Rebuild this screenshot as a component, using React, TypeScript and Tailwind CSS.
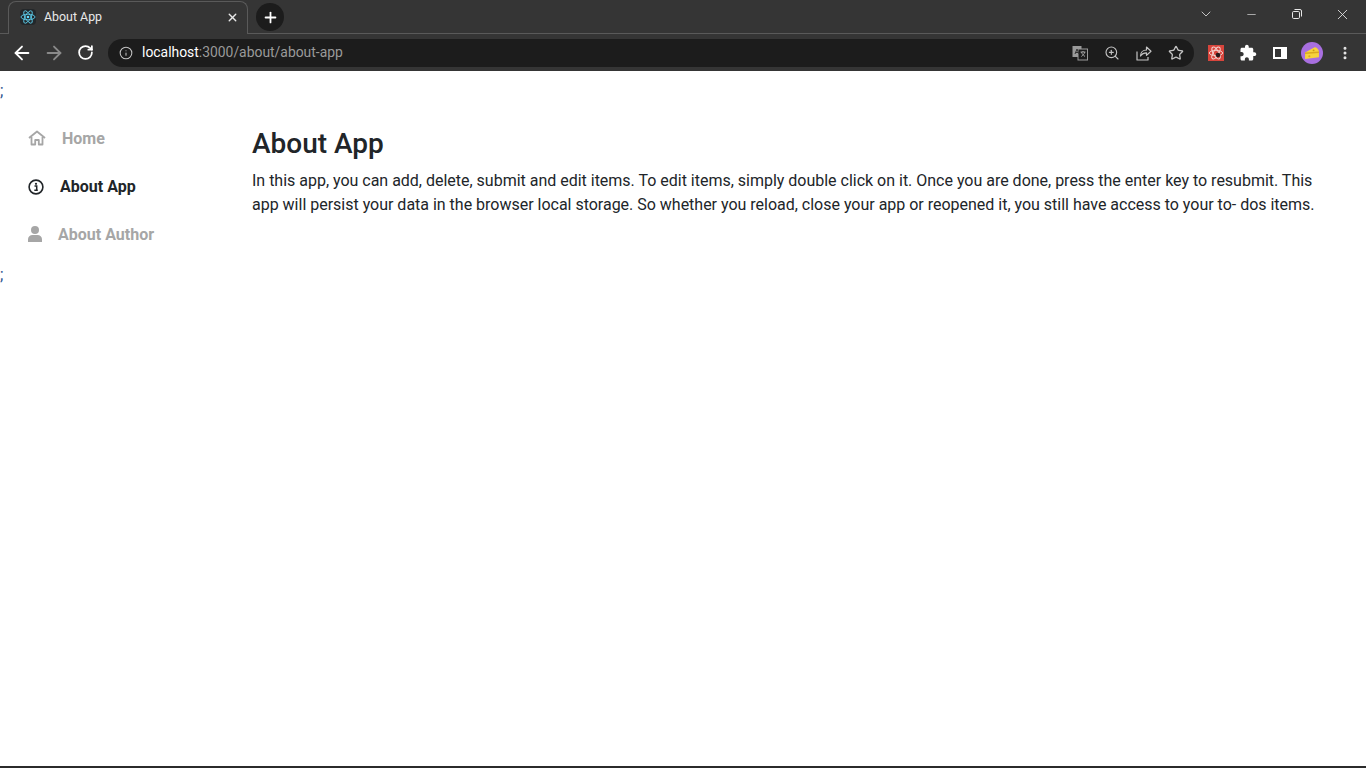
import { ArrowLeft, ArrowRight, RotateCw, Plus, X, Minus, ChevronDown, Info, ZoomIn, Star, EllipsisVertical } from "lucide-react";

function ReactLogo({ size = 16 }: { size?: number }) {
  return (
    <svg width={size} height={size} viewBox="0 0 24 24" fill="none" stroke="#61dafb" strokeWidth={1.2}>
      <circle cx="12" cy="12" r="2" fill="#61dafb" stroke="none" />
      <ellipse cx="12" cy="12" rx="10.5" ry="4.2" />
      <ellipse cx="12" cy="12" rx="10.5" ry="4.2" transform="rotate(60 12 12)" />
      <ellipse cx="12" cy="12" rx="10.5" ry="4.2" transform="rotate(120 12 12)" />
    </svg>
  );
}

function Translate() {
  return (
    <svg width="16" height="16" viewBox="0 0 16 16">
      <rect x="0.5" y="1" width="9" height="11" fill="#9a9a9a" />
      <rect x="6" y="4" width="9.5" height="11" fill="#1c1c1c" stroke="#9a9a9a" />
      <path d="M8.5 7h5M11 6v1M9.5 7c.5 2 2 3.5 3.5 4.5M12.8 7c-.5 2-2 3.5-3.5 4.5" stroke="#bdbdbd" strokeWidth="0.8" fill="none" />
      <path d="M3 9l2-5 2 5M3.7 7.5h2.6" stroke="#333" strokeWidth="1" fill="none" />
    </svg>
  );
}

function ShareIcon() {
  return (
    <svg width="16" height="16" viewBox="0 0 16 16" fill="none" stroke="#c4c4c4" strokeWidth="1.2" strokeLinejoin="round">
      <path d="M1 6.500v8.500h11v-3" />
      <path d="M4.500 11c0-3.800 2.700-6 6-6V2l4.500 4.200-4.500 4.200V7.800c-2.500 0-4.500.8-6 3.200z" />
    </svg>
  );
}

function PuzzleIcon() {
  return (
    <svg width="18" height="18" viewBox="0 0 24 24" fill="white">
      <path d="M20.500 11H19V7c0-1.100-.9-2-2-2h-4V3.500C13 2.120 11.880 1 10.500 1S8 2.120 8 3.500V5H4c-1.100 0-1.990.9-1.990 2v3.800H3.500c1.490 0 2.700 1.210 2.700 2.700s-1.210 2.700-2.700 2.700H2V20c0 1.100.9 2 2 2h3.800v-1.500c0-1.490 1.210-2.700 2.700-2.700 1.490 0 2.700 1.210 2.700 2.700V22H17c1.100 0 2-.9 2-2v-4h1.500c1.380 0 2.500-1.120 2.500-2.500S21.880 11 20.500 11z" />
    </svg>
  );
}

function Restore() {
  return (
    <svg width="12" height="12" viewBox="0 0 12 12" fill="none" stroke="#e8e8e8" strokeWidth="1">
      <rect x="1.5" y="3.5" width="7" height="7" rx="1.2" />
      <path d="M3.5 1.500h5.500a1.500 1.500 0 0 1 1.500 1.500v5.500" />
    </svg>
  );
}

function Cheese() {
  return (
    <div className="w-[22px] h-[22px] rounded-full bg-[#a86fe0] flex items-center justify-center">
      <svg width="16" height="15" viewBox="0 0 15 14">
        <path d="M1 7l9-5c2 0 3.500 1.500 4 4v5.500l-13 1.500z" fill="#f6d33c" />
        <path d="M1 7l13-1v1.500l-13 1z" fill="#d9a820" />
        <circle cx="9" cy="5" r="0.9" fill="#c99a18" />
        <circle cx="5" cy="10.500" r="1" fill="#d9a820" />
      </svg>
    </div>
  );
}

function ExtensionBadge() {
  return (
    <div className="w-4 h-4 bg-[#d8453c] flex items-center justify-center">
      <svg width="16" height="16" viewBox="0 0 24 24" fill="none" stroke="#f4d5d2" strokeWidth={1.4}>
        <ellipse cx="12" cy="12" rx="10" ry="4" />
        <ellipse cx="12" cy="12" rx="10" ry="4" transform="rotate(60 12 12)" />
        <ellipse cx="12" cy="12" rx="10" ry="4" transform="rotate(120 12 12)" />
        <circle cx="15" cy="15" r="3.500" fill="#2a1a1a" stroke="none" />
      </svg>
    </div>
  );
}

function BrowserChrome() {
  return (
    <div className="bg-[#353535] text-white font-['Roboto',sans-serif]">
      <div className="h-[34px] flex items-end pl-2 border-b border-[#5a5a5a]">
        <div className="w-[240px] h-[33px] -mb-px bg-[#353535] rounded-t-lg border border-b-0 border-[#5a5a5a] flex items-center pl-[11px] pr-2 pb-[2px]">
          <div className="w-4 h-4 bg-[#23272a] rounded-sm flex items-center justify-center">
            <ReactLogo />
          </div>
          <span className="ml-2 text-[12.4px] text-[#e8e8e8]">About App</span>
          <X size={13} strokeWidth={2.5} className="ml-auto text-[#e8e8e8]" />
        </div>
        <div className="ml-2 mb-[2px] w-7 h-7 rounded-full bg-[#1c1c1c] flex items-center justify-center">
          <Plus size={17} strokeWidth={2.5} />
        </div>
        <div className="ml-auto self-start flex items-center h-7 text-[#e8e8e8]">
          <ChevronDown size={16} strokeWidth={1.2} className="mr-[31px]" />
          <Minus size={13} strokeWidth={1.2} className="mr-[33px]" />
          <Restore />
          <X size={17} strokeWidth={1.2} className="ml-[31px] mr-[15px]" />
        </div>
      </div>
      <div className="h-[37px] flex items-center pl-[11px]">
        <ArrowLeft size={22} strokeWidth={2} />
        <ArrowRight size={22} strokeWidth={2} className="ml-[10px] text-[#8a8a8a]" />
        <RotateCw size={17} strokeWidth={2.5} className="ml-3" />
        <div className="ml-[14px] w-[1086px] h-7 rounded-full bg-[#1c1c1c] flex items-center pl-[11px] pr-[10px]">
          <Info size={14} strokeWidth={1.8} className="text-[#c4c4c4]" />
          <span className="ml-[9px] text-[13.9px] text-white">localhost</span>
          <span className="text-[13.9px] text-[#9a9a9a]">:3000/about/about-app</span>
          <div className="ml-auto flex items-center gap-4 text-[#c4c4c4]">
            <Translate />
            <ZoomIn size={16} strokeWidth={1.7} />
            <ShareIcon />
            <Star size={16} strokeWidth={1.9} />
          </div>
        </div>
        <div className="ml-[14px] flex items-center">
          <ExtensionBadge />
          <div className="ml-[15px]">
            <PuzzleIcon />
          </div>
          <div className="ml-4 w-[14px] h-3 border-2 border-white border-r-[6px]" />
        </div>
        <div className="ml-[14px]">
          <Cheese />
        </div>
        <EllipsisVertical size={16} strokeWidth={2.5} className="ml-[14px] text-[#e8e8e8]" />
      </div>
    </div>
  );
}

function HomeIcon() {
  return (
    <svg width="18" height="16" viewBox="0 0 18 16" fill="none" stroke="#a6a6a6" strokeWidth="1.8" strokeLinejoin="round" className="-mt-[2px]">
      <path d="M1 8l8-6.500 8 6.500" />
      <path d="M3.500 7v7.500h3.700v-4.500h3.600v4.500h3.700V7" />
    </svg>
  );
}

function InfoIcon() {
  return (
    <svg width="16" height="16" viewBox="0 0 16 16" fill="none">
      <circle cx="8" cy="8" r="6.900" stroke="#212529" strokeWidth="1.600" />
      <circle cx="8" cy="4.800" r="1.100" fill="#212529" />
      <path d="M6.500 7h2.200v4M6.300 11.300h3.500" stroke="#212529" strokeWidth="1.500" />
    </svg>
  );
}

function UserIcon() {
  return (
    <svg width="14" height="16" viewBox="0 0 14 16" fill="#a6a6a6" className="-mt-[2px]">
      <circle cx="7" cy="4" r="4" />
      <path d="M0 16v-2.500C0 10.500 2 9 4.500 9h5C12 9 14 10.500 14 13.500V16z" />
    </svg>
  );
}

export default function App() {
  return (
    <div className="min-h-[768px] h-[768px] flex flex-col bg-white overflow-hidden font-['Roboto',sans-serif]">
      <BrowserChrome />
      <div className="flex-1">
        <div className="text-base leading-6 h-6 mt-2 text-[#1f4e8c]">;</div>
        <div className="flex">
          <ul className="w-[252px] shrink-0 pl-7 pt-3 font-bold text-base text-[#a6a6a6]">
            <li className="h-12 flex items-center">
              <HomeIcon />
              <span className="ml-4">Home</span>
            </li>
            <li className="h-12 flex items-center text-[#212529]">
              <InfoIcon />
              <span className="ml-4">About App</span>
            </li>
            <li className="h-12 flex items-center">
              <UserIcon />
              <span className="ml-4">About Author</span>
            </li>
          </ul>
          <div className="flex-1 pt-6 pr-[30px] text-[#212529]">
            <h1 className="text-[28px] leading-[34px] font-medium">About App</h1>
            <p className="mt-2 text-base leading-6 tracking-[-0.01px]">
              In this app, you can add, delete, submit and edit items. To edit items, simply double click on it. Once you are done, press the enter key to resubmit. This app will persist your data in the browser local storage. So whether you reload, close your app or reopened it, you still have access to your to- dos items.
            </p>
          </div>
        </div>
        <div className="text-base leading-6 h-6 mt-1 text-[#1f4e8c]">;</div>
      </div>
      <div className="h-[2px] bg-[#2b2b2b]" />
    </div>
  );
}
